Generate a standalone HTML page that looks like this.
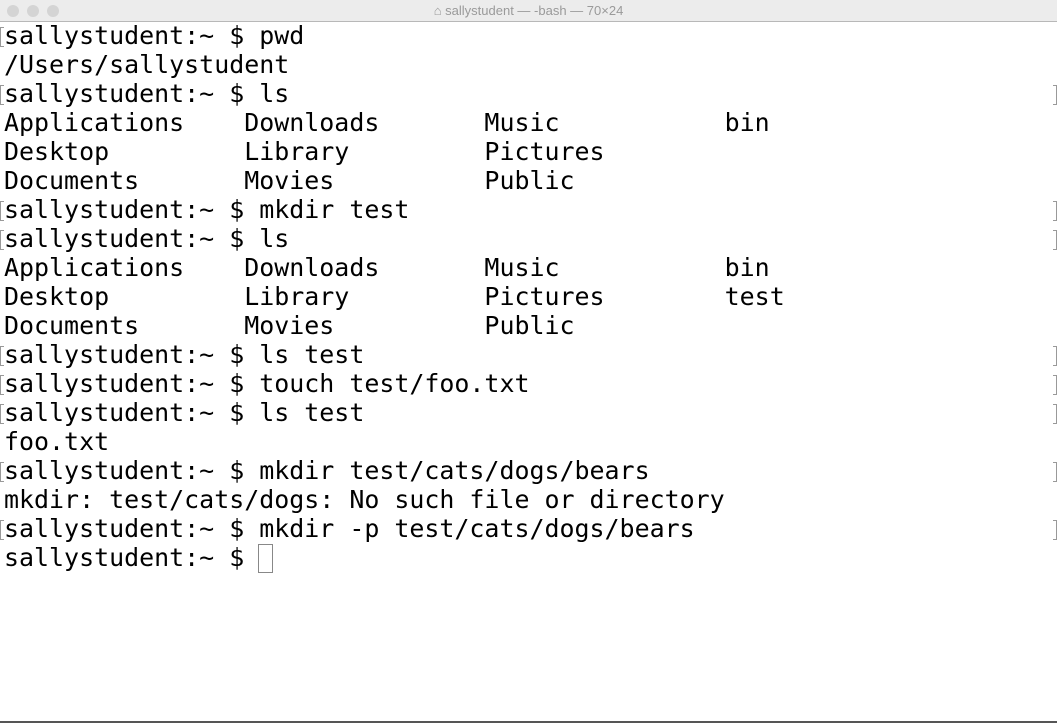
<!DOCTYPE html>
<html><head><style>
body{margin:0;width:1057px;height:723px;background:#fff;overflow:hidden;position:relative}
.tb{position:absolute;left:0;top:0;width:1057px;height:21px;background:#ececec;border-bottom:1px solid #b8b8b8}
.dot{position:absolute;top:5px;width:12px;height:12px;border-radius:50%;background:#d4d4d4}
.title{position:absolute;top:3px;left:0;width:1057px;text-align:center;font:13px "Liberation Sans",sans-serif;color:#9a9a9a}
pre{position:absolute;left:4px;top:21px;margin:0;font-family:"DejaVu Sans Mono",monospace;font-size:24.95px;line-height:29px;color:#000}
.br{position:absolute;width:3px;height:18px;border:1px solid #999;}
.l{left:0;border-right:none}.r{left:1053px;border-left:none}
.cur{position:absolute;left:258px;top:544px;width:13px;height:27px;border:1px solid #888}
.bot{position:absolute;left:0;top:721px;width:1057px;height:2px;background:#555}
</style></head><body>
<div class="tb"><div class="dot" style="left:7px"></div><div class="dot" style="left:27px"></div><div class="dot" style="left:47px"></div><div class="title">⌂ sallystudent — -bash — 70×24</div></div>
<pre>sallystudent:~ $ pwd
/Users/sallystudent
sallystudent:~ $ ls
Applications    Downloads       Music           bin
Desktop         Library         Pictures
Documents       Movies          Public
sallystudent:~ $ mkdir test
sallystudent:~ $ ls
Applications    Downloads       Music           bin
Desktop         Library         Pictures        test
Documents       Movies          Public
sallystudent:~ $ ls test
sallystudent:~ $ touch test/foo.txt
sallystudent:~ $ ls test
foo.txt
sallystudent:~ $ mkdir test/cats/dogs/bears
mkdir: test/cats/dogs: No such file or directory
sallystudent:~ $ mkdir -p test/cats/dogs/bears
sallystudent:~ $ </pre>
<div class="br l" style="top:27px"></div>
<div class="br l" style="top:85px"></div><div class="br r" style="top:85px"></div>
<div class="br l" style="top:201px"></div><div class="br r" style="top:201px"></div>
<div class="br l" style="top:230px"></div><div class="br r" style="top:230px"></div>
<div class="br l" style="top:346px"></div><div class="br r" style="top:346px"></div>
<div class="br l" style="top:375px"></div><div class="br r" style="top:375px"></div>
<div class="br l" style="top:404px"></div><div class="br r" style="top:404px"></div>
<div class="br l" style="top:462px"></div><div class="br r" style="top:462px"></div>
<div class="br l" style="top:520px"></div><div class="br r" style="top:520px"></div>
<div class="cur"></div>
<div class="bot"></div>
</body></html>
